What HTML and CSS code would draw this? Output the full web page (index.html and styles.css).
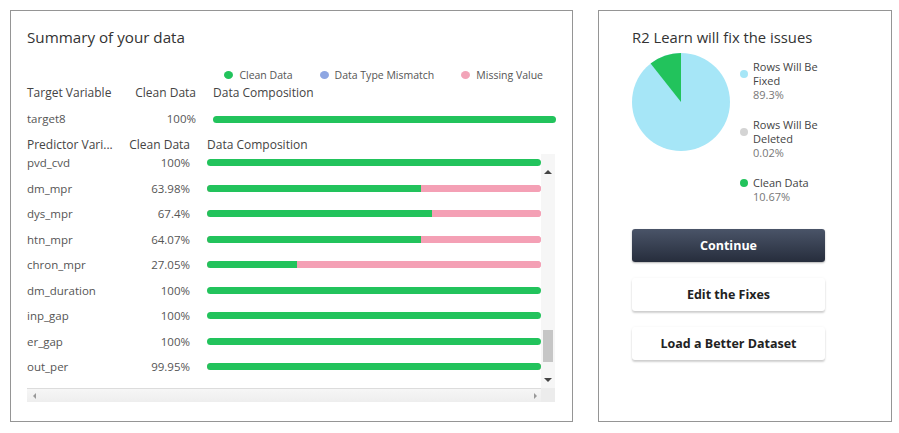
FILE: index.html
```html
<!DOCTYPE html>
<html>
<head>
<meta charset="utf-8">
<link rel="stylesheet" href="styles.css">
</head>
<body>
<div class="page">
  <section class="panel summary">
    <h2 class="title">Summary of your data</h2>
    <div class="legend">
      <span class="lg"><i class="ldot green"></i>Clean Data</span>
      <span class="lg"><i class="ldot blue"></i>Data Type Mismatch</span>
      <span class="lg"><i class="ldot pink"></i>Missing Value</span>
    </div>
    <div class="tgrid target">
      <div class="head">Target Variable</div>
      <div class="head pct">Clean Data</div>
      <div class="head comp">Data Composition</div>
      <div class="cell name">target8</div>
      <div class="cell pct">100%</div>
      <div class="cell comp"><div class="bar"><b class="g" style="width:100%"></b></div></div>
    </div>
    <div class="tgrid pred-head">
      <div class="head">Predictor Vari...</div>
      <div class="head pct">Clean Data</div>
      <div class="head comp">Data Composition</div>
    </div>
    <div class="scrollbox">
      <div class="viewport">
        <div class="list">
          <div class="tgrid prow"><div class="name">pvd_cvd</div><div class="pct">100%</div><div class="comp"><div class="bar"><b class="g" style="width:100%"></b></div></div></div>
          <div class="tgrid prow"><div class="name">dm_mpr</div><div class="pct">63.98%</div><div class="comp"><div class="bar"><b class="g" style="width:63.98%"></b><b class="p"></b></div></div></div>
          <div class="tgrid prow"><div class="name">dys_mpr</div><div class="pct">67.4%</div><div class="comp"><div class="bar"><b class="g" style="width:67.4%"></b><b class="p"></b></div></div></div>
          <div class="tgrid prow"><div class="name">htn_mpr</div><div class="pct">64.07%</div><div class="comp"><div class="bar"><b class="g" style="width:64.07%"></b><b class="p"></b></div></div></div>
          <div class="tgrid prow"><div class="name">chron_mpr</div><div class="pct">27.05%</div><div class="comp"><div class="bar"><b class="g" style="width:27.05%"></b><b class="p"></b></div></div></div>
          <div class="tgrid prow"><div class="name">dm_duration</div><div class="pct">100%</div><div class="comp"><div class="bar"><b class="g" style="width:100%"></b></div></div></div>
          <div class="tgrid prow"><div class="name">inp_gap</div><div class="pct">100%</div><div class="comp"><div class="bar"><b class="g" style="width:100%"></b></div></div></div>
          <div class="tgrid prow"><div class="name">er_gap</div><div class="pct">100%</div><div class="comp"><div class="bar"><b class="g" style="width:100%"></b></div></div></div>
          <div class="tgrid prow"><div class="name">out_per</div><div class="pct">99.95%</div><div class="comp"><div class="bar"><b class="g" style="width:99.95%"></b><b class="p"></b></div></div></div>
          <div class="tgrid prow"><div class="name">ipt_per</div><div class="pct">96.95%</div><div class="comp"><div class="bar"><b class="g" style="width:96.95%"></b><b class="p"></b></div></div></div>
        </div>
      </div>
      <div class="vscroll">
        <span class="sbtn"><i class="arr up"></i></span>
        <span class="thumb"></span>
        <span class="sbtn"><i class="arr down"></i></span>
      </div>
      <div class="hscroll">
        <span class="hbtn"><i class="arr left"></i></span>
        <span class="hbtn"><i class="arr right"></i></span>
      </div>
      <div class="corner"></div>
    </div>
  </section>

  <section class="panel fix">
    <h2 class="title small">R2 Learn will fix the issues</h2>
    <div class="pie-row">
      <svg class="pie" width="98" height="98" viewBox="0 0 98 98">
        <circle cx="49" cy="49" r="49" fill="#a6e6f7"/>
        <path d="M49 49 L49 0 A49 49 0 0 0 18.6 10.6 Z" fill="#22c35c"/>
      </svg>
      <div class="plegend">
        <div class="pitem">
          <div class="pname"><i class="pdot cyan"></i><span>Rows Will Be Fixed</span></div>
          <div class="pval">89.3%</div>
        </div>
        <div class="pitem">
          <div class="pname"><i class="pdot grey"></i><span>Rows Will Be Deleted</span></div>
          <div class="pval">0.02%</div>
        </div>
        <div class="pitem">
          <div class="pname"><i class="pdot green"></i><span>Clean Data</span></div>
          <div class="pval">10.67%</div>
        </div>
      </div>
    </div>
    <div class="buttons">
      <button class="btn primary">Continue</button>
      <button class="btn">Edit the Fixes</button>
      <button class="btn">Load a Better Dataset</button>
    </div>
  </section>
</div>
</body>
</html>
```

FILE: styles.css
```css
* { box-sizing: border-box; }
html, body { margin: 0; padding: 0; background: #fff; }
body { font-family: "Open Sans", "Noto Sans", sans-serif; color: #555; }

.page {
  display: flex;
  gap: 25px;
  padding: 10px 0 0 10px;
}

.panel {
  border: 1px solid #959595;
  height: 412px;
  background: #fff;
}

.summary {
  width: 563px;
  padding: 16px 16px 0 16px;
}

.fix {
  width: 294px;
  padding: 16px 0 0 33px;
}

.title {
  margin: 0;
  font-weight: 400;
  font-size: 15.2px;
  line-height: 20px;
  color: #333;
}
.title.small { font-size: 14.8px; }

/* legend */
.legend {
  display: flex;
  justify-content: flex-end;
  gap: 27px;
  margin-top: 21px;
  padding-right: 13px;
  font-size: 10.5px;
  line-height: 14px;
  color: #555;
}
.lg { display: flex; align-items: center; }
.ldot {
  display: inline-block;
  width: 9px;
  height: 8px;
  border-radius: 50%;
  margin-right: 6px;
}
.ldot.green { background: #22c35c; }
.ldot.blue { background: #8ea6e2; }
.ldot.pink { background: #f2a4b8; }

/* tables */
.tgrid {
  display: grid;
  grid-template-columns: 100px 69px 1fr;
  align-items: center;
  font-size: 11.5px;
  color: #555;
}
.tgrid .pct { text-align: right; }
.tgrid .comp { padding-left: 17px; }
.head {
  font-size: 12px;
  line-height: 16px;
  color: #444;
  white-space: nowrap;
}
.target { margin-top: 3px; row-gap: 10px; }
.target .cell { line-height: 16px; }

.pred-head {
  grid-template-columns: 94px 69px 1fr;
  margin-top: 10px;
}

.bar {
  display: flex;
  height: 7px;
  border-radius: 4px;
  overflow: hidden;
  background: #f2a4b8;
}
.bar .g { display: block; height: 100%; background: #22c35c; }
.bar .p { display: block; flex: 1; height: 100%; background: #f4a0b5; }

/* scroll box */
.scrollbox {
  display: grid;
  grid-template-columns: 514px 14px;
  grid-template-rows: 234px 14px;
  margin-top: 1px;
}
.viewport {
  overflow: hidden;
}
.list { margin-top: -4px; }
.prow {
  grid-template-columns: 94px 69px 1fr;
  height: 25.5px;
}
.prow .name { white-space: nowrap; }

.vscroll {
  display: flex;
  flex-direction: column;
  align-items: center;
  background: #f6f6f6;
}
.sbtn {
  height: 16px;
  width: 14px;
  display: flex;
  align-items: center;
  justify-content: center;
}
.sbtn:first-child { height: 20px; align-items: flex-end; }
.thumb {
  margin-top: auto;
  margin-bottom: 10px;
  width: 10px;
  height: 32px;
  background: #c6c6c6;
}
.arr {
  display: block;
  width: 0;
  height: 0;
  border: 4px solid transparent;
}
.arr.up { border-bottom: 4px solid #444; border-top-width: 0; }
.arr.down { border-top: 4px solid #444; border-bottom-width: 0; }
.arr.left { border-right: 3px solid #999; border-left-width: 0; border-top-width: 3px; border-bottom-width: 3px; }
.arr.right { border-left: 3px solid #999; border-right-width: 0; border-top-width: 3px; border-bottom-width: 3px; }

.hscroll {
  display: flex;
  justify-content: space-between;
  align-items: center;
  background: linear-gradient(#f6f6f6, #eeeeee);
  border-top: 1px solid #dcdcdc;
  padding: 0 4px 0 6px;
}
.corner { background: #ececec; }

/* right panel */
.pie-row {
  display: flex;
  gap: 10px;
  margin-top: 6px;
}
.pie { display: block; flex: none; }
.plegend {
  display: flex;
  flex-direction: column;
  gap: 16px;
  margin-top: 7px;
  font-size: 11px;
  line-height: 14px;
}
.pname { display: flex; align-items: center; color: #444; }
.pname span { width: 76px; }
.pdot {
  display: inline-block;
  flex: none;
  width: 8px;
  height: 8px;
  border-radius: 50%;
  margin-right: 5px;
}
.pdot.cyan { background: #a6e6f7; }
.pdot.grey { background: #d4d4d4; }
.pdot.green { background: #22c35c; }
.pval { padding-left: 13px; color: #777; }

.buttons {
  display: flex;
  flex-direction: column;
  gap: 16px;
  margin-top: 25px;
  width: 193px;
}
.btn {
  height: 33px;
  border: none;
  border-radius: 3px;
  background: #fff;
  font-family: "Open Sans", "Noto Sans", sans-serif;
  font-weight: 700;
  font-size: 12.5px;
  color: #222;
  box-shadow: 0 2px 2px rgba(0,0,0,0.18), 0 0 3px rgba(0,0,0,0.05);
}
.btn.primary {
  color: #fff;
  background: linear-gradient(#4a5468, #262d3c);
  box-shadow: 0 1px 2px rgba(0,0,0,0.3);
}
```
